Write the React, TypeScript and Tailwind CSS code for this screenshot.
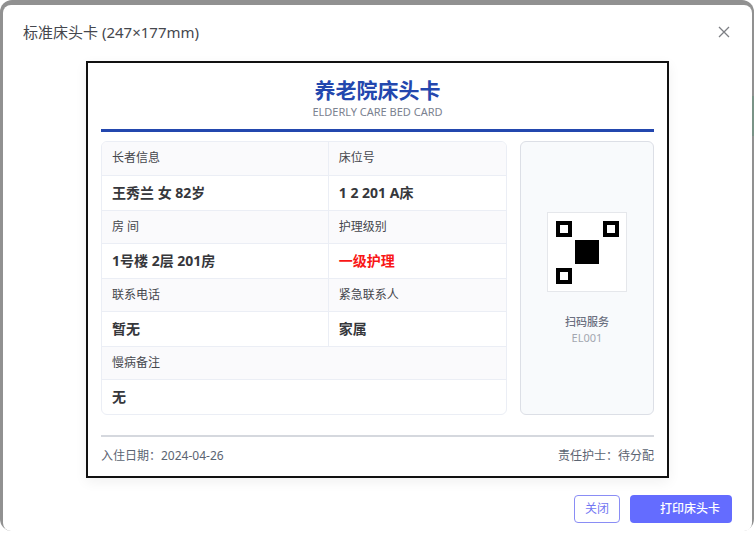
import React, { useState } from 'react';

interface Cell {
  label: string;
  value: string;
  danger?: boolean;
}

const rows: Cell[][] = [
  [
    { label: '长者信息', value: '王秀兰 女 82岁' },
    { label: '床位号', value: '1 2 201 A床' },
  ],
  [
    { label: '房 间', value: '1号楼 2层 201房' },
    { label: '护理级别', value: '一级护理', danger: true },
  ],
  [
    { label: '联系电话', value: '暂无' },
    { label: '紧急联系人', value: '家属' },
  ],
  [{ label: '慢病备注', value: '无' }],
];

function InfoTable() {
  return (
    <div className="flex-1 overflow-hidden rounded-md border border-[#ebeef5]">
      <table className="w-full table-fixed border-collapse text-left">
        <colgroup>
          <col className="w-[56%]" />
          <col />
        </colgroup>
        <tbody>
          {rows.map((cells, rowIndex) => (
            <React.Fragment key={rowIndex}>
              <tr className={rowIndex > 0 ? 'border-t border-[#ebeef5]' : ''}>
                {cells.map((cell, i) => (
                  <th
                    key={cell.label}
                    colSpan={cells.length === 1 ? 2 : 1}
                    className={`h-[33px] bg-[#fafafc] px-2.5 text-xs font-normal text-[#45474d] ${i > 0 ? 'border-l border-[#ebeef5]' : ''}`}
                  >
                    {cell.label}
                  </th>
                ))}
              </tr>
              <tr className="border-t border-[#ebeef5]">
                {cells.map((cell, i) => (
                  <td
                    key={cell.label}
                    colSpan={cells.length === 1 ? 2 : 1}
                    className={`h-[35px] px-2.5 text-sm font-bold ${cell.danger ? 'text-[#f91616]' : 'text-[#36373b]'} ${i > 0 ? 'border-l border-[#ebeef5]' : ''}`}
                  >
                    {cell.value}
                  </td>
                ))}
              </tr>
            </React.Fragment>
          ))}
        </tbody>
      </table>
    </div>
  );
}

function QrCode() {
  return (
    <svg viewBox="0 0 80 80" className="size-20" role="img" aria-label="扫码服务" shapeRendering="crispEdges">
      <rect x="0.5" y="0.5" width="79" height="79" fill="#fff" stroke="#e5e7eb" />
      {[[9, 9], [56, 9], [9, 56]].map(([x, y]) => (
        <g key={`${x}-${y}`}>
          <rect x={x} y={y} width="16" height="16" fill="#000" />
          <rect x={x + 4} y={y + 4} width="8" height="8" fill="#fff" />
        </g>
      ))}
      <rect x="28" y="28" width="24" height="24" fill="#000" />
    </svg>
  );
}

export default function App() {
  const [open, setOpen] = useState(true);

  if (!open) return null;

  return (
    <div className="min-h-screen bg-white font-['Noto_Sans','Noto_Sans_CJK_SC',sans-serif]">
      <div className="relative rounded-xl bg-[#919191] pt-[5px] pr-0.5 pl-[3px]">
        {/* dimmed page content behind the mask */}
        <span className="absolute top-24 right-0 h-10 w-0.5 bg-[#7a9387]" />
        <div role="dialog" aria-labelledby="dialog-title" className="rounded-lg bg-white px-5 pt-[15px] pb-2">
          <div className="flex h-6 items-center justify-between">
            <h2 id="dialog-title" className="text-[15px] leading-5 text-[#45474d]">标准床头卡 (247×177mm)</h2>
            <button type="button" aria-label="关闭对话框" onClick={() => setOpen(false)} className="flex size-4 items-center justify-center text-[#7d7f84]">
              <svg viewBox="0 0 12 12" className="size-3" fill="none" stroke="currentColor" strokeWidth="1.3">
                <path d="M1 1l10 10M11 1L1 11" />
              </svg>
            </button>
          </div>

          <div className="mx-auto mt-[17px] max-w-[583px] border-2 border-[#111] bg-white px-[13px] pt-3 pb-2.5 shadow-[0_4px_12px_rgba(0,0,0,0.06)]">
            <div className="flex h-[57px] flex-col items-center border-b-3 border-[#2347ae] pt-px">
              <h1 className="text-[21px] leading-7 font-bold text-[#2347ae]">养老院床头卡</h1>
              <p className="text-[11px] leading-4 text-[#7b8290]">ELDERLY CARE BED CARD</p>
            </div>

            <div className="mt-[9px] flex gap-[13px]">
              <InfoTable />
              <div className="flex w-[134px] flex-col items-center justify-center rounded-md border border-[#dcdfe6] bg-[#f8fafc]">
                <QrCode />
                <p className="mt-5 text-[11px] leading-5 font-medium text-[#6b7080]">扫码服务</p>
                <p className="text-[11px] leading-3 text-[#a3a7b0]">EL001</p>
              </div>
            </div>

            <div className="mt-5 flex justify-between border-t-2 border-[#d5d8de] pt-[9px] text-xs leading-5 text-[#5b6472]">
              <span>入住日期：2024-04-26</span>
              <span>责任护士：待分配</span>
            </div>
          </div>

          <div className="mt-[17px] flex justify-end gap-2.5">
            <button type="button" onClick={() => setOpen(false)} className="h-7 rounded border border-[#8a8df5] px-2.5 text-xs text-[#7377f2]">
              关闭
            </button>
            <button type="button" onClick={() => window.print()} className="h-7 rounded bg-[#646cff] pr-3 pl-[30px] text-xs font-medium text-white">
              打印床头卡
            </button>
          </div>
        </div>
      </div>
    </div>
  );
}
